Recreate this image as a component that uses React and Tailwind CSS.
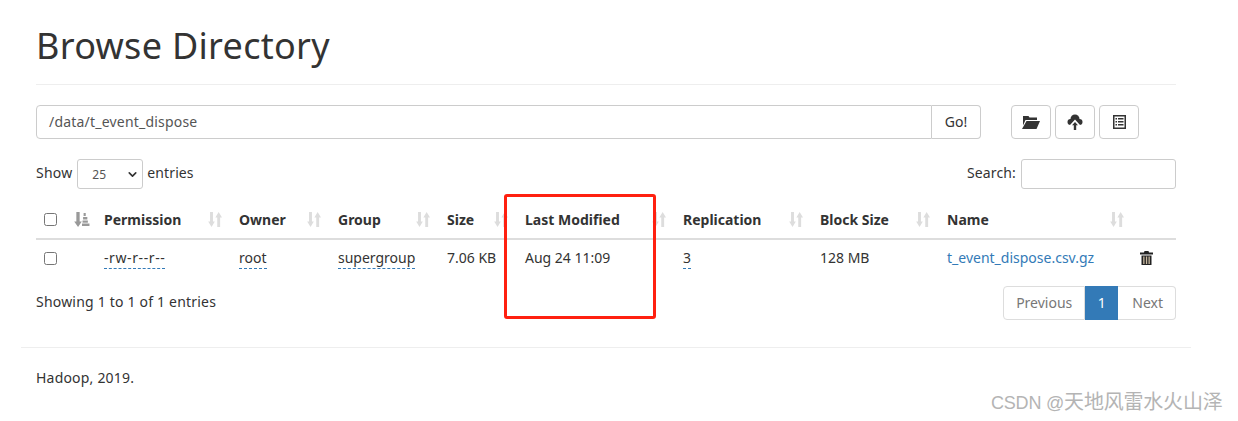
import React from 'react';
import { ChevronDown } from 'lucide-react';

const columns = [
  { label: 'Permission', width: 'w-[135px]' },
  { label: 'Owner', width: 'w-[99px]' },
  { label: 'Group', width: 'w-[109px]' },
  { label: 'Size', width: 'w-[78px]' },
  { label: 'Last Modified', width: 'w-[158px]' },
  { label: 'Replication', width: 'w-[137px]' },
  { label: 'Block Size', width: 'w-[127px]' },
  { label: 'Name', width: 'w-[194px]' },
];

function SortIcon({ active }) {
  const color = active ? '#999999' : '#dddddd';
  return (
    <svg width={active ? 16 : 14} height="15" viewBox="0 0 15 15" preserveAspectRatio="none" className="shrink-0" fill={color}>
      <path d="M2.2 0h3.100v9.500h2L3.800 15 .2 9.500h2z" />
      {active ? (
        <>
          <rect x="9" y="1" width="2" height="3" />
          <rect x="8.500" y="5" width="4" height="2.500" />
          <rect x="8" y="8.500" width="5" height="2.200" />
          <rect x="7.500" y="11.500" width="7" height="2.500" />
        </>
      ) : (
        <path d="M9.900 15H13V5.500h2L11.400 0 7.900 5.500h2z" />
      )}
    </svg>
  );
}

function FolderIcon() {
  return (
    <svg width="18" height="14" viewBox="0 0 18 14" fill="#333333">
      <path d="M1 1h5.500l1 1.500H15V5H3.500L1 10.500z" />
      <path d="M4.500 6H18l-3.500 8H0z" />
    </svg>
  );
}

function CloudUploadIcon() {
  return (
    <svg width="16" height="16" viewBox="0 0 16 16" fill="#333333">
      <circle cx="3.500" cy="8" r="3" />
      <circle cx="8" cy="5" r="4.500" />
      <circle cx="12.500" cy="8" r="3" />
      <path d="M8 5.500l5 5.500H10v5H6v-5H3z" fill="#ffffff" />
      <path d="M8 8l3 3.200H9.200V16H6.800v-4.800H5z" />
    </svg>
  );
}

function ListIcon() {
  return (
    <svg width="13" height="14" viewBox="0 0 13 14" fill="#333333">
      <path d="M0 0h13v14H0zM1.500 1.500v11h10v-11z" fillRule="evenodd" />
      <path d="M2.500 3h1.500v1.500H2.500zM5 3h5.500v1.500H5zM2.500 6h1.500v1.500H2.500zM5 6h5.500v1.500H5zM2.500 9h1.500v1.500H2.500zM5 9h5.500v1.500H5z" />
    </svg>
  );
}

function TrashIcon() {
  return (
    <svg width="13" height="14" viewBox="0 0 13 14" className="block">
      <path d="M4.500 0h4l.5 1.500h4V3.500H0V1.500h4z" fill="#222222" />
      <path d="M1.500 4.500h10V14h-10z" fill="#222222" />
      <path d="M3.200 5.500h1.300v7.500H3.200zM5.900 5.500h1.300v7.500H5.900zM8.500 5.500h1.300v7.500H8.500z" fill="#c9b9a0" />
    </svg>
  );
}

function Checkbox() {
  return <span className="block w-[13px] h-[13px] border border-[#767676] rounded-[2.500px] bg-white" />;
}

function Tip({ children }) {
  return <span className="border-b border-dashed border-[#337ab7] pb-px">{children}</span>;
}

export default function App() {
  return (
    <div className="relative w-[1238px] h-[421px] bg-white overflow-hidden text-[#333333] text-[14px] leading-5 font-['Noto_Sans',sans-serif]">
      <div className="w-[1170px] ml-[21px] px-[15px]">
        <div className="pt-[20px] pb-[18px] mb-[20px] border-b border-[#eeeeee]">
          <h1 className="text-[36px] leading-[40px] tracking-[0.3px] text-[#333333] m-0 mt-[6px]">Browse Directory</h1>
        </div>

        <div className="flex items-start">
          <div className="flex w-[945px]">
            <div className="w-[896px] h-[34px] border border-[#cccccc] rounded-l-[4px] px-3 flex items-center text-[#555555] tracking-[0.2px]">
              /data/t_event_dispose
            </div>
            <button className="w-[49px] h-[34px] border border-l-0 border-[#cccccc] rounded-r-[4px] bg-white">Go!</button>
          </div>
          <div className="flex gap-[4px] ml-[30px]">
            <button className="w-[40px] h-[34px] border border-[#cccccc] rounded-[4px] flex items-center justify-center">
              <FolderIcon />
            </button>
            <button className="w-[40px] h-[34px] border border-[#cccccc] rounded-[4px] flex items-center justify-center">
              <CloudUploadIcon />
            </button>
            <button className="w-[40px] h-[34px] border border-[#cccccc] rounded-[4px] flex items-center justify-center">
              <ListIcon />
            </button>
          </div>
        </div>

        <div className="flex items-center justify-between mt-[20px] h-[30px]">
          <div className="flex items-center gap-[4px]">
            <span className="tracking-[0.2px] mr-[1px] -mt-[2px]">Show</span>
            <div className="w-[66px] h-[30px] border border-[#cccccc] rounded-[3px] flex items-center justify-between pl-[14px] pr-[3px] text-[12px] text-[#555555]">
              <span className="mt-[2px]">25</span>
              <ChevronDown className="w-[13px] h-[13px] text-[#333333]" strokeWidth={3} />
            </div>
            <span className="tracking-[0.1px] -mt-[2px]">entries</span>
          </div>
          <div className="flex items-center gap-[5px]">
            <span className="tracking-[0.15px] -mt-[2px]">Search:</span>
            <div className="w-[155px] h-[30px] border border-[#cccccc] rounded-[3px]" />
          </div>
        </div>

        <table className="w-[1140px] table-fixed border-collapse mt-[11px]">
          <thead>
            <tr className="border-b-2 border-[#dddddd] h-[39px]">
              <th className="w-[30px] px-2 align-middle"><Checkbox /></th>
              <th className="w-[30px] px-2 align-middle"><SortIcon active /></th>
              {columns.map((col) => (
                <th key={col.label} className={`${col.width} px-2 align-middle text-left font-bold`}>
                  <div className="flex items-center justify-between">
                    <span className="whitespace-nowrap mt-[2px]">{col.label}</span>
                    <span className="mr-[1px]"><SortIcon /></span>
                  </div>
                </th>
              ))}
              <th className="w-[43px]" />
            </tr>
          </thead>
          <tbody>
            <tr className="h-[37px]">
              <td className="px-2 align-middle"><Checkbox /></td>
              <td />
              <td className="px-2 align-middle tracking-[0.6px]"><Tip>-rw-r--r--</Tip></td>
              <td className="px-2 align-middle"><Tip>root</Tip></td>
              <td className="px-2 align-middle"><Tip>supergroup</Tip></td>
              <td className="px-2 align-middle whitespace-nowrap">7.06 KB</td>
              <td className="px-2 align-middle">Aug 24 11:09</td>
              <td className="px-2 align-middle"><Tip>3</Tip></td>
              <td className="px-2 align-middle">128 MB</td>
              <td className="px-2 align-middle whitespace-nowrap text-[#337ab7]">t_event_dispose.csv.gz</td>
              <td className="pl-[7px] align-middle"><TrashIcon /></td>
            </tr>
          </tbody>
        </table>

        <div className="flex items-start justify-between mt-[10px]">
          <div className="pt-[6px] tracking-[0.2px]">Showing 1 to 1 of 1 entries</div>
          <div className="flex h-[34px] items-stretch">
            <span className="border border-[#dddddd] rounded-l-[4px] px-3 flex items-center text-[#777777]">Previous</span>
            <span className="bg-[#337ab7] text-white w-[33px] flex items-center justify-center">1</span>
            <span className="border border-l-0 border-[#dddddd] rounded-r-[4px] pl-[14px] pr-[12px] flex items-center text-[#777777]">Next</span>
          </div>
        </div>
      </div>

      <div className="w-[1170px] ml-[21px] mt-[27px] border-t border-[#eeeeee] px-[15px] pt-[20px] tracking-[0.2px]">Hadoop, 2019.</div>

      {/* annotation and watermark sit over the page */}
      <div className="absolute left-[504px] top-[194px] w-[152px] h-[125px] border-[3px] border-[#ff2010] rounded-[3px]" />
      <div className="absolute left-[991px] top-[390px] text-[18px] leading-6 tracking-[-0.2px] text-[#b4b4b4] whitespace-nowrap font-['Liberation_Sans','Noto_Sans_CJK_SC',sans-serif]">
        CSDN @<span className="text-[20px]">天地风雷水火山泽</span>
      </div>
    </div>
  );
}
